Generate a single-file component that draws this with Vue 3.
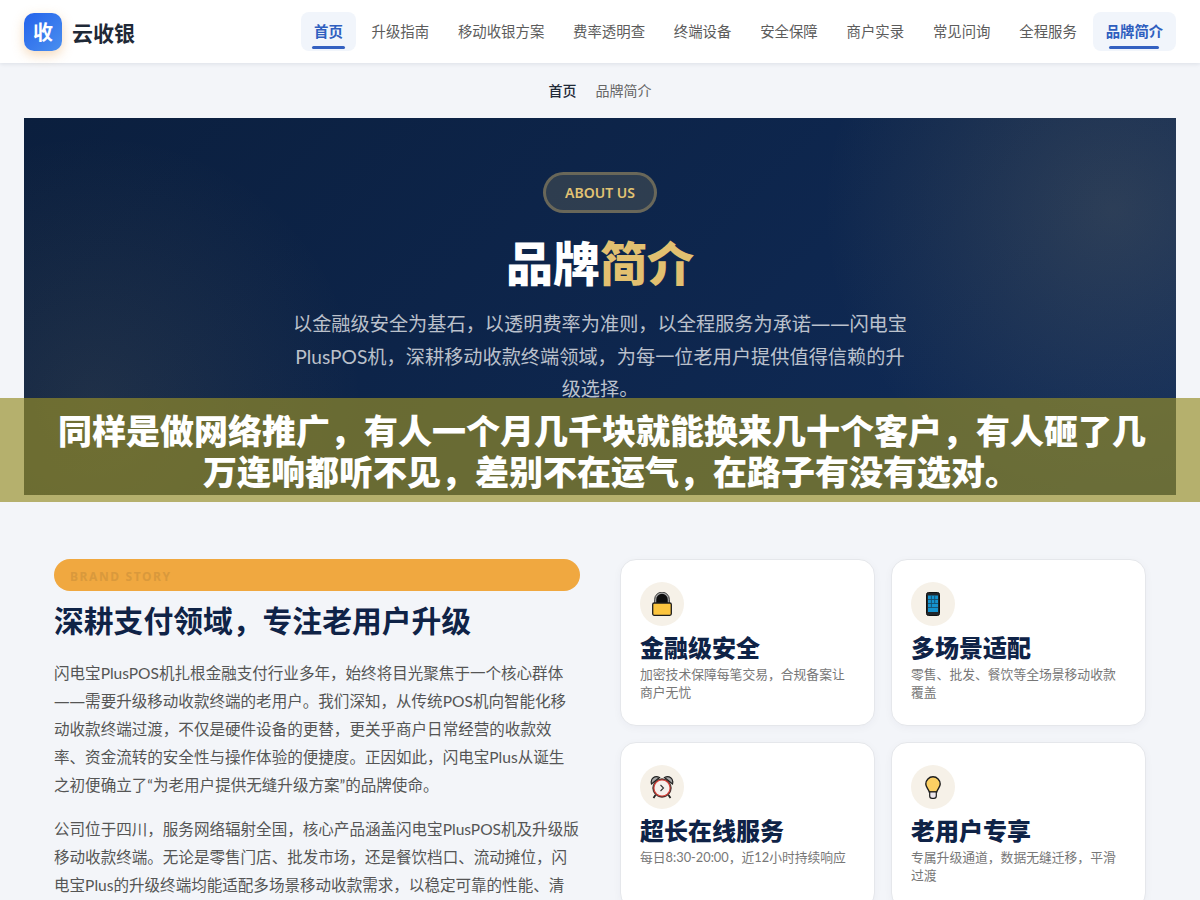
<template>
  <div class="page">
    <header class="topbar">
      <div class="brand">
        <span class="logo">收</span>
        <span class="brand-name">云收银</span>
      </div>
      <nav class="nav">
        <a v-for="item in navItems" :key="item" class="nav-item" :class="{ active: activeItems.includes(item) }">{{ item }}</a>
      </nav>
    </header>

    <div class="crumbs">
      <span class="crumb-home">首页</span>
      <span class="crumb-current">品牌简介</span>
    </div>

    <section class="hero">
      <span class="hero-pill">ABOUT US</span>
      <h1 class="hero-title">品牌<span>简介</span></h1>
      <p class="hero-sub">以金融级安全为基石，以透明费率为准则，以全程服务为承诺<span class="dash">——</span>闪电宝PlusPOS机，深耕移动收款终端领域，为每一位老用户提供值得信赖的升级选择。</p>
    </section>

    <main class="story">
      <div class="story-text">
        <div class="story-tag">BRAND STORY</div>
        <h2>深耕支付领域，专注老用户升级</h2>
        <p>闪电宝PlusPOS机扎根金融支付行业多年，始终将目光聚焦于一个核心群体<span class="dash">——</span>需要升级移动收款终端的老用户。我们深知，从传统POS机向智能化移动收款终端过渡，不仅是硬件设备的更替，更关乎商户日常经营的收款效率、资金流转的安全性与操作体验的便捷度。正因如此，闪电宝Plus从诞生<br />之初便确立了“为老用户提供无缝升级方案”的品牌使命。</p>
        <p>公司位于四川，服务网络辐射全国，核心产品涵盖闪电宝PlusPOS机及升级版移动收款终端。无论是零售门店、批发市场，还是餐饮档口、流动摊位，闪电宝Plus的升级终端均能适配多场景移动收款需求，以稳定可靠的性能、清</p>
      </div>

      <div class="cards">
        <div class="card">
          <div class="card-icon">
            <svg width="20" height="24" viewBox="0 0 20 24">
              <path d="M3.500 12V7.500a6.500 6.500 0 0 1 13 0V12z" fill="#0d0d0d" stroke="#a8a8a8" stroke-width="1.500" />
              <path d="M2.600 11V7.500a7.400 7.400 0 0 1 14.800 0V11" fill="none" stroke="#1c1c1c" stroke-width="0.800" />
              <rect x="0.700" y="11" width="18.600" height="12.300" rx="1.500" fill="#fcc53f" stroke="#1d1d1d" stroke-width="1.300" />
            </svg>
          </div>
          <h3>金融级安全</h3>
          <p>加密技术保障每笔交易，合规备案让商户无忧</p>
        </div>
        <div class="card">
          <div class="card-icon">
            <svg width="14" height="24" viewBox="0 0 14 24">
              <rect x="0.500" y="0.500" width="13" height="23" rx="2" fill="#20262b" stroke="#111" />
              <rect x="2" y="3.500" width="10" height="16.500" fill="#1593cf" />
              <path d="M2 7.500h10M2 11.500h10M2 15.500h10M5.400 3.500V15.500M8.700 3.500V11.500" stroke="#16506f" stroke-width="0.900" />
            </svg>
          </div>
          <h3>多场景适配</h3>
          <p>零售、批发、餐饮等全场景移动收款覆盖</p>
        </div>
        <div class="card">
          <div class="card-icon">
            <svg width="24" height="24" viewBox="0 0 24 24">
              <path d="M1.500 9 C0 3.500 5 0 9.500 2.500Z M22.500 9 C24 3.500 19 0 14.500 2.500Z" fill="#a9a9a9" stroke="#222" stroke-width="1.200" />
              <path d="M5.500 20l-2 3M18.500 20l2 3" stroke="#222" stroke-width="1.800" />
              <circle cx="12" cy="13" r="9.200" fill="#d4423a" stroke="#222" stroke-width="0.900" />
              <circle cx="12" cy="13" r="7.500" fill="#f6f0ec" />
              <path d="M10.500 10L13.500 13L10.500 16" fill="none" stroke="#333" stroke-width="1.100" />
            </svg>
          </div>
          <h3>超长在线服务</h3>
          <p>每日8:30-20:00，近12小时持续响应</p>
        </div>
        <div class="card">
          <div class="card-icon">
            <svg width="16" height="23" viewBox="0 0 16 23">
              <path d="M8 0.800a7.200 7.200 0 0 0-7.200 7.200c0 3.200 2.700 5 3.500 8h7.400c0.800-3 3.500-4.800 3.500-8A7.200 7.200 0 0 0 8 0.800z" fill="#fbcf63" stroke="#1c1c1c" stroke-width="1.400" />
              <path d="M4.700 16h6.600v4a2.400 2.400 0 0 1-2.400 2.400H7.100A2.400 2.400 0 0 1 4.700 20z" fill="#ece6ec" stroke="#1c1c1c" stroke-width="1.200" />
            </svg>
          </div>
          <h3>老用户专享</h3>
          <p>专属升级通道，数据无缝迁移，平滑过渡</p>
        </div>
      </div>
    </main>

    <div class="notice">
      <span class="notice-line">同样是做网络推广，有人一个月几千块就能换来几十个客户，有人砸了几</span>
      <span class="notice-line second">万连响都听不见，差别不在运气，在路子有没有选对。</span>
    </div>
  </div>
</template>

<script setup>
const navItems = ['首页', '升级指南', '移动收银方案', '费率透明查', '终端设备', '安全保障', '商户实录', '常见问询', '全程服务', '品牌简介']
const activeItems = ['首页', '品牌简介']
</script>

<style>
html, body {
  margin: 0;
  overflow: hidden;
  background: #f3f5f9;
}
</style>

<style scoped>
.page {
  position: relative;
  height: 900px;
  overflow: hidden;
  background: #f3f5f9;
  font-family: Lato, "Noto Sans CJK SC", sans-serif;
}

.topbar {
  display: flex;
  align-items: center;
  justify-content: space-between;
  height: 63px;
  padding: 0 24px;
  background: #fff;
  box-shadow: 0 1px 4px rgba(15, 35, 71, 0.1);
}

.brand {
  display: flex;
  align-items: center;
  gap: 10px;
}

.logo {
  display: flex;
  align-items: center;
  justify-content: center;
  width: 38px;
  height: 38px;
  border-radius: 10px;
  background: linear-gradient(135deg, #2563eb, #4a8fef);
  box-shadow: 0 4px 12px rgba(232, 170, 100, 0.45);
  color: #fff;
  font-size: 20px;
  font-weight: 700;
}

.brand-name {
  color: #1f2937;
  font-size: 21px;
  font-weight: 700;
}

.nav {
  display: flex;
  gap: 3.200px;
}

.nav-item {
  position: relative;
  padding: 8px 12.800px;
  height: 23px;
  line-height: 23px;
  border-radius: 8px;
  color: #5c5c5c;
  font-size: 14.400px;
}

.nav-item.active {
  background: #f1f5fb;
  color: #2f5fbf;
  font-weight: 600;
}

.nav-item.active::after {
  content: "";
  position: absolute;
  left: 20%;
  width: 60%;
  bottom: 2px;
  height: 3px;
  border-radius: 2px;
  background: #3461c1;
}

.crumbs {
  display: flex;
  justify-content: center;
  align-items: center;
  gap: 19px;
  box-sizing: border-box;
  height: 55px;
  padding-bottom: 2px;
  font-size: 14px;
}

.crumb-home {
  color: #1f2937;
  font-weight: 500;
}

.crumb-current {
  color: #666;
}

.hero {
  display: flex;
  flex-direction: column;
  align-items: center;
  height: 323px;
  margin: 0 24px;
  padding-top: 54px;
  background:
    radial-gradient(circle 290px at 1089px 92px, rgba(226, 192, 112, 0.14), transparent),
    radial-gradient(circle 270px at 70px 285px, rgba(226, 192, 112, 0.09), transparent),
    linear-gradient(135deg, #0b1f3e, #102c5a);
}

.hero-pill {
  padding: 8px 19px;
  border: 3px solid rgba(226, 191, 110, 0.33);
  border-radius: 30px;
  background: rgba(226, 191, 110, 0.16);
  color: #e2c373;
  font-family: "Noto Sans", sans-serif;
  font-size: 14px;
  font-weight: 600;
  line-height: 19px;
}

.hero-title {
  margin: 19px 0 0;
  color: #fff;
  font-size: 47px;
  font-weight: 800;
  line-height: 62px;
}

.hero-title span {
  color: #e2c070;
}

.hero-sub {
  width: 620px;
  margin: 14px 0 0;
  color: rgba(255, 255, 255, 0.72);
  font-size: 19.200px;
  line-height: 32.600px;
  text-align: center;
}

.dash {
  font-family: "Noto Sans", sans-serif;
}

.story {
  display: grid;
  grid-template-columns: 1fr 1fr;
  gap: 40px;
  padding: 64px 54px 0;
}

.story-tag {
  height: 32px;
  padding-left: 16px;
  border-radius: 16px;
  background: #f0a840;
  color: #d9993c;
  font-family: "Noto Sans", sans-serif;
  font-size: 12px;
  font-weight: 700;
  letter-spacing: 1.600px;
  line-height: 35px;
}

.story-text h2 {
  margin: 10px 0 18px;
  color: #0f2347;
  font-size: 29.800px;
  font-weight: 700;
  line-height: 40px;
}

.story-text p {
  margin: 0 0 16px;
  color: #555;
  font-size: 15.550px;
  line-height: 28px;
}

.cards {
  display: grid;
  grid-template-columns: 1fr 1fr;
  gap: 16px;
  align-content: start;
}

.card {
  height: 167px;
  box-sizing: border-box;
  padding: 22px 19px 0;
  border: 1px solid #e5e7eb;
  border-radius: 16px;
  background: #fff;
  box-shadow: 0 2px 8px rgba(15, 35, 71, 0.04);
}

.card-icon {
  display: flex;
  align-items: center;
  justify-content: center;
  width: 44px;
  height: 44px;
  border-radius: 50%;
  background: #f6f1e8;
}

.card h3 {
  margin: 5px 0 0;
  color: #0f2347;
  font-size: 24px;
  font-weight: 800;
  line-height: 34px;
}

.card p {
  margin: 0;
  color: #777;
  font-size: 12.800px;
  line-height: 18px;
}

.notice {
  position: absolute;
  top: 398px;
  left: 0;
  right: 0;
  padding: 12px 46px 10px 50px;
  background: rgba(150, 142, 40, 0.67);
  color: #fff;
  font-size: 34px;
  font-weight: 900;
  line-height: 41px;
  text-align: center;
}

.notice-line {
  display: block;
}

.notice-line.second {
  padding-left: 18px;
}
</style>
